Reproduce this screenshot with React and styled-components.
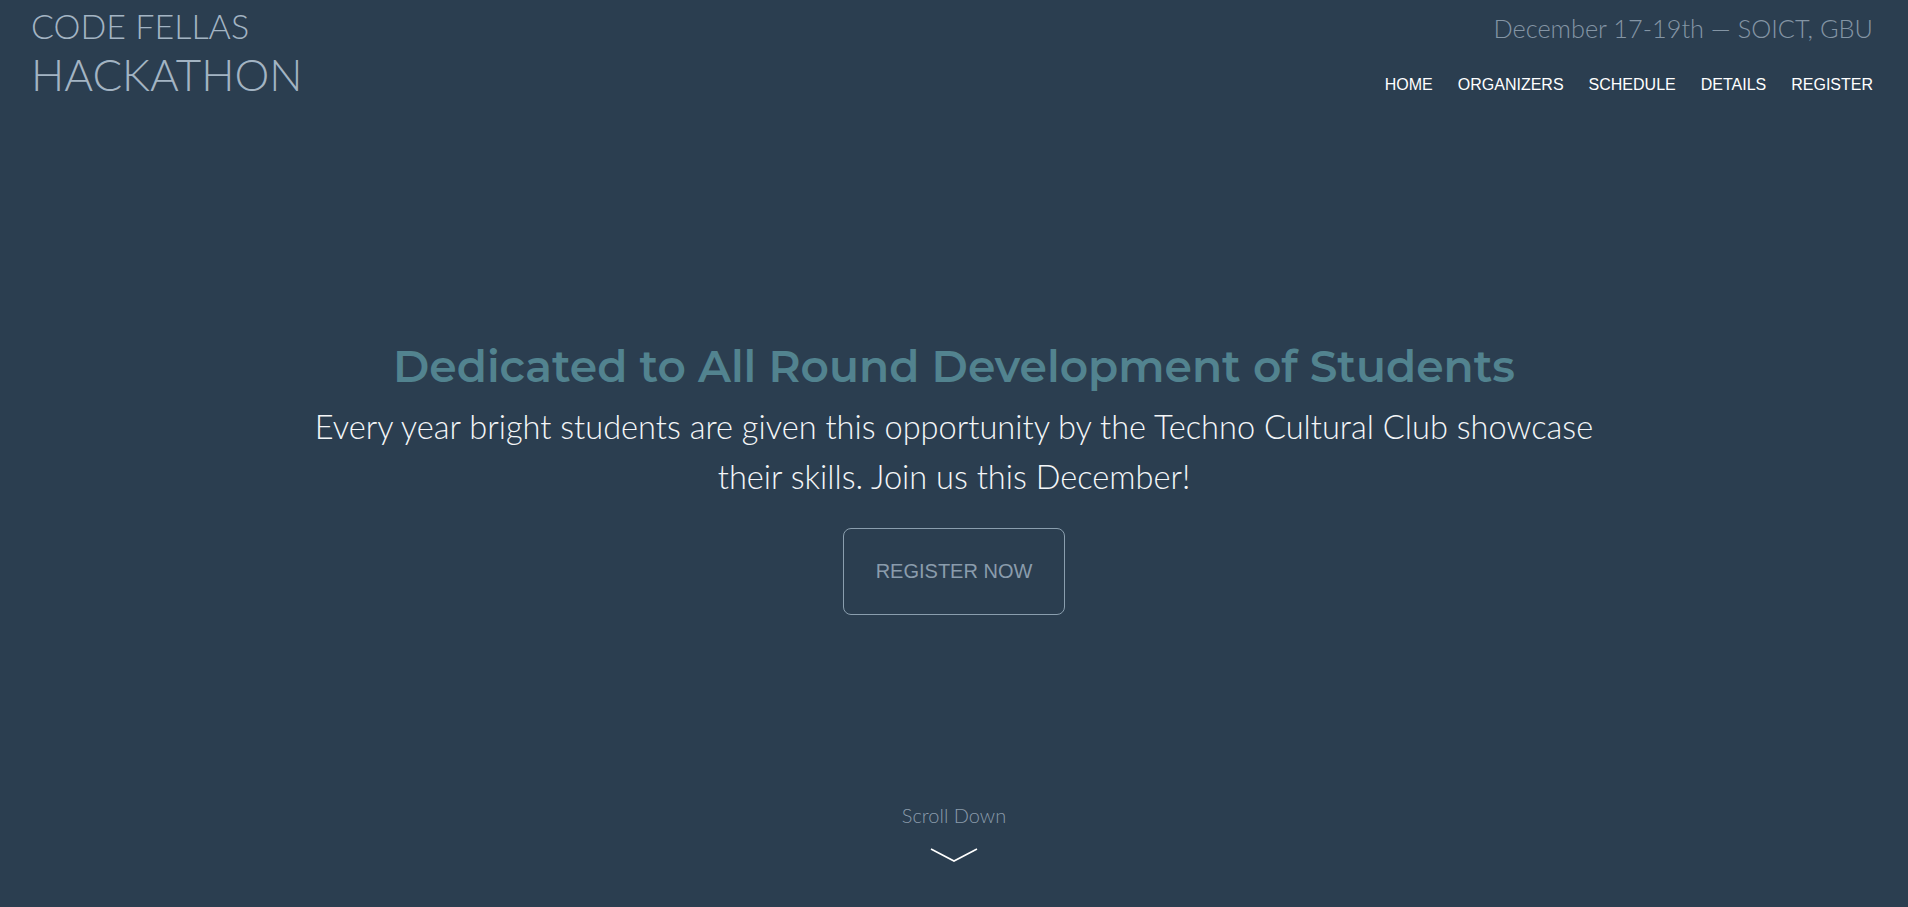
import React from 'react';
import styled, { createGlobalStyle } from 'styled-components';

// Global page styles
const GlobalStyle = createGlobalStyle`
  html, body {
    margin: 0;
    padding: 0;
    background: #2b3e50;
  }
  * { box-sizing: border-box; }
`;

const Page = styled.div`
  min-height: 100vh;
  height: 907px;
  display: flex;
  flex-direction: column;
  background: #2b3e50;
  overflow: hidden;
`;

// Header
const Header = styled.header`
  display: flex;
  justify-content: space-between;
  align-items: flex-start;
  padding: 0 35px 0 31px;
`;

const Logo = styled.a`
  display: flex;
  flex-direction: column;
  font-family: Lato, "Open Sans", sans-serif;
  font-weight: 300;
  color: #a3b4c3;
  text-decoration: none;
  padding-top: 9px;
`;

const LogoLine = styled.span`
  font-size: ${props => props.big ? '44px' : '34px'};
  line-height: 1;
  margin-top: ${props => props.big ? '9px' : '0'};
`;

const HeaderRight = styled.div`
  display: flex;
  flex-direction: column;
  align-items: flex-end;
  padding-top: 16px;
`;

const DateLine = styled.div`
  font-family: Lato, "Open Sans", sans-serif;
  font-weight: 300;
  font-size: 25.3px;
  line-height: 1;
  color: #8495a5;
`;

const Nav = styled.nav`
  display: flex;
  gap: 25px;
  margin-top: 36px;
`;

const NavLink = styled.a`
  font-family: "Liberation Sans", Arial, sans-serif;
  font-size: 16px;
  line-height: 1;
  color: #ffffff;
  text-decoration: none;
  text-transform: uppercase;
  cursor: pointer;
`;

// Hero
const Hero = styled.section`
  flex: 1;
  display: flex;
  flex-direction: column;
  align-items: center;
  padding-top: 244px;
`;

const Title = styled.h1`
  margin: 0;
  font-family: Montserrat, "Noto Sans", sans-serif;
  font-weight: 600;
  font-size: 44px;
  line-height: 1.2;
  color: #52838f;
  text-align: center;
`;

const Lead = styled.p`
  margin: 9px 0 0;
  max-width: 1330px;
  font-family: Lato, "Open Sans", sans-serif;
  font-weight: 300;
  font-size: 32.6px;
  line-height: 50px;
  color: #f4f6f8;
  text-align: center;
`;

const RegisterButton = styled.button`
  margin-top: 26px;
  width: 222px;
  height: 87px;
  background: transparent;
  border: 1px solid #8a9eae;
  border-radius: 8px;
  font-family: "Liberation Sans", Arial, sans-serif;
  font-size: 20px;
  color: #8a9cac;
  text-transform: uppercase;
  cursor: pointer;
`;

// Scroll indicator
const ScrollDown = styled.a`
  display: flex;
  flex-direction: column;
  align-items: center;
  padding-bottom: 45px;
  font-family: Lato, "Open Sans", sans-serif;
  font-weight: 300;
  font-size: 20px;
  line-height: 1;
  color: #8a9bab;
  text-decoration: none;
`;

const Chevron = styled.svg`
  margin-top: 23px;
`;

const navItems = ['Home', 'Organizers', 'Schedule', 'Details', 'Register'];

export default function App() {
  return (
    <>
      <GlobalStyle />
      <Page>
        <Header>
          <Logo href="#">
            <LogoLine>CODE FELLAS</LogoLine>
            <LogoLine big>HACKATHON</LogoLine>
          </Logo>
          <HeaderRight>
            <DateLine>December 17-19th — SOICT, GBU</DateLine>
            <Nav>
              {navItems.map(item => (
                <NavLink key={item} href="#">{item}</NavLink>
              ))}
            </Nav>
          </HeaderRight>
        </Header>

        <Hero>
          <Title>Dedicated to All Round Development of Students</Title>
          <Lead>
            Every year bright students are given this opportunity by the Techno Cultural Club showcase their skills. Join us this December!
          </Lead>
          <RegisterButton>Register Now</RegisterButton>
        </Hero>

        <ScrollDown href="#">
          Scroll Down
          <Chevron width="48" height="14" viewBox="0 0 48 14">
            <polyline points="1,1 24,13 47,1" fill="none" stroke="#ffffff" strokeWidth="1.6" />
          </Chevron>
        </ScrollDown>
      </Page>
    </>
  );
}
